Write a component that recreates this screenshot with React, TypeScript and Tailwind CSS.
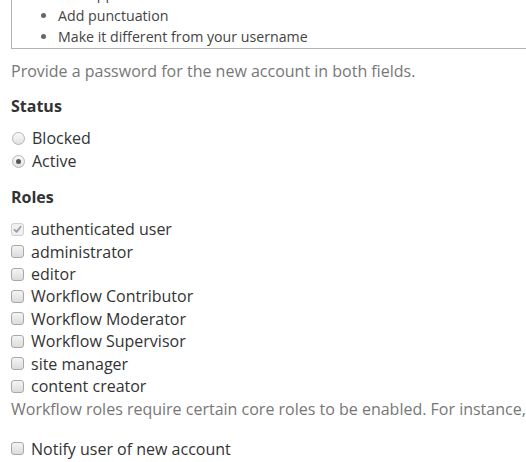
import React from "react";

const Radio = ({ checked }: { checked?: boolean }) => (
  <span className="relative inline-flex h-[13px] w-[13px] shrink-0 items-center justify-center rounded-full border border-[#b4b4b4] bg-gradient-to-b from-[#fbfbfb] to-[#e2e2e2]">
    {checked && <span className="h-[5px] w-[5px] rounded-full bg-[#555]" />}
  </span>
);

const Checkbox = ({ checked, disabled }: { checked?: boolean; disabled?: boolean }) => (
  <span
    className={
      disabled
        ? "inline-flex h-[13px] w-[13px] shrink-0 items-center justify-center rounded-[3px] border border-[#cfcfcf] bg-[#f0f0f0]"
        : "inline-flex h-[13px] w-[13px] shrink-0 items-center justify-center rounded-[3px] border border-[#a8a8a8] bg-gradient-to-b from-[#f4f4f4] to-[#dcdcdc]"
    }
  >
    {checked && (
      <svg width="9" height="9" viewBox="0 0 9 9">
        <path d="M1.5 4.8 L3.6 6.9 L7.6 1.8" fill="none" stroke="#a0a0a0" strokeWidth="1.8" strokeLinecap="round" strokeLinejoin="round" />
      </svg>
    )}
  </span>
);

const roles: { label: string; checked?: boolean; disabled?: boolean }[] = [
  { label: "authenticated user", checked: true, disabled: true },
  { label: "administrator" },
  { label: "editor" },
  { label: "Workflow Contributor" },
  { label: "Workflow Moderator" },
  { label: "Workflow Supervisor" },
  { label: "site manager" },
  { label: "content creator" },
];

export default function App() {
  return (
    <div
      className="h-[462px] w-[526px] overflow-hidden bg-white pl-[11px] text-[16px] leading-[22.4px] text-[#333]"
      style={{ fontFamily: '"Open Sans", "Noto Sans", sans-serif' }}
    >
      <div className="-mt-[18px] mr-[-30px] border border-[#b3b3b3] text-[14.2px] leading-[21.5px] text-[#444]">
        <ul className="list-disc pl-[46px] marker:text-[#666]">
          <li>Add uppercase letters</li>
          <li>Add punctuation</li>
          <li>Make it different from your username</li>
        </ul>
      </div>
      <p className="mt-[11px] text-[#777]">Provide a password for the new account in both fields.</p>

      <div className="mt-[13px] font-bold text-[#333]">Status</div>
      <div className="mt-[10px] flex flex-col">
        <label className="flex items-center gap-[7px] pl-[1px]">
          <Radio />
          <span>Blocked</span>
        </label>
        <label className="mt-[0.6px] flex items-center gap-[7px] pl-[1px]">
          <Radio checked />
          <span>Active</span>
        </label>
      </div>

      <div className="mt-[13px] font-bold text-[#333]">Roles</div>
      <div className="mt-[10px] flex flex-col">
        {roles.map((r) => (
          <label key={r.label} className="flex items-center gap-[7px]">
            <Checkbox checked={r.checked} disabled={r.disabled} />
            <span>{r.label}</span>
          </label>
        ))}
      </div>
      <p className="mt-[1px] whitespace-nowrap text-[#777]">
        Workflow roles require certain core roles to be enabled. For instance, the Workflow Contributor role requires the editor role.
      </p>

      <label className="mt-[17px] flex items-center gap-[7px]">
        <Checkbox />
        <span>Notify user of new account</span>
      </label>
    </div>
  );
}
